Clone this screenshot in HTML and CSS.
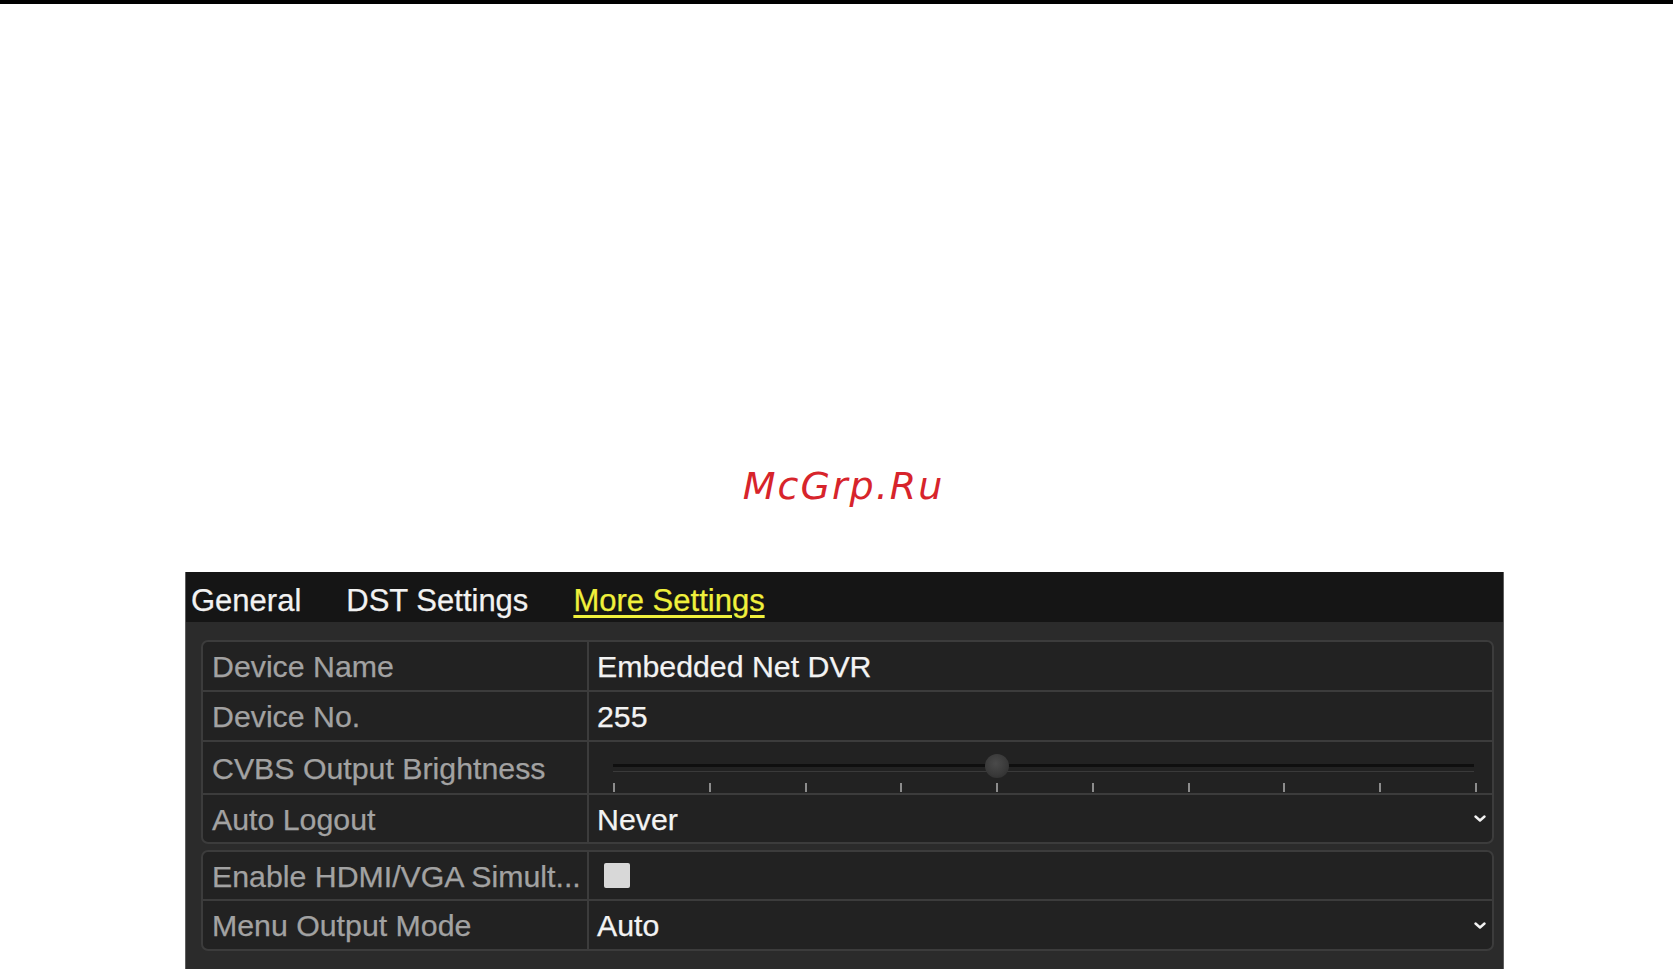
FILE: index.html
```html
<!DOCTYPE html>
<html>
<head>
<meta charset="utf-8">
<link rel="stylesheet" href="styles.css">
</head>
<body>
<div class="topbar"></div>
<div class="mark">McGrp.Ru</div>
<div class="panel">
  <div class="tabs">
    <span class="tab">General</span>
    <span class="tab">DST Settings</span>
    <span class="tab active">More Settings</span>
  </div>
  <div class="body">
    <div class="group">
      <div class="row row-a">
        <div class="label">Device Name</div>
        <div class="value">Embedded Net DVR</div>
      </div>
      <div class="row row-a">
        <div class="label">Device No.</div>
        <div class="value">255</div>
      </div>
      <div class="row row-slider">
        <div class="label">CVBS Output Brightness</div>
        <div class="value">
          <div class="slider">
            <div class="track"></div>
            <div class="track-light"></div>
            <div class="ticks">
              <i></i><i></i><i></i><i></i><i></i><i></i><i></i><i></i><i></i><i></i>
            </div>
            <div class="knob"></div>
          </div>
        </div>
      </div>
      <div class="row">
        <div class="label">Auto Logout</div>
        <div class="value select"><span>Never</span>
          <svg class="chev" width="12" height="8" viewBox="0 0 12 8"><polyline points="1.5,1.5 6,5.5 10.5,1.5" fill="none" stroke="#f2f2f2" stroke-width="2.4" stroke-linecap="round" stroke-linejoin="round"/></svg>
        </div>
      </div>
    </div>
    <div class="group">
      <div class="row">
        <div class="label">Enable HDMI/VGA Simult...</div>
        <div class="value"><span class="checkbox"></span></div>
      </div>
      <div class="row row-a">
        <div class="label">Menu Output Mode</div>
        <div class="value select"><span>Auto</span>
          <svg class="chev" width="12" height="8" viewBox="0 0 12 8"><polyline points="1.5,1.5 6,5.5 10.5,1.5" fill="none" stroke="#f2f2f2" stroke-width="2.4" stroke-linecap="round" stroke-linejoin="round"/></svg>
        </div>
      </div>
    </div>
  </div>
</div>
</body>
</html>
```
FILE: styles.css
```css
html, body {
  margin: 0;
  padding: 0;
  background: #ffffff;
  overflow: hidden;
}

.topbar {
  height: 4px;
  background: #000000;
}

.mark {
  margin-top: 460px;
  height: 44px;
  line-height: 44px;
  text-align: center;
  padding-left: 14px;
  font-family: "DejaVu Sans", sans-serif;
  font-style: italic;
  font-size: 38px;
  letter-spacing: 2px;
  color: #d7242b;
}

.panel {
  margin-top: 64px;
  margin-left: 185px;
  width: 1317px;
  border-left: 1px solid #5e5e5e;
  border-right: 1px solid #5e5e5e;
  font-family: "Liberation Sans", Arial, sans-serif;
  font-size: 30.3px;
  -webkit-text-stroke: 0.25px currentColor;
}

.tabs {
  height: 44px;
  padding-top: 6px;
  line-height: 46px;
  background: #151515;
  display: flex;
  gap: 45px;
  padding-left: 5px;
  font-size: 31px;
}

.tab {
  color: #f2f2f2;
  white-space: nowrap;
}

.tab.active {
  color: #f0f03c;
  text-decoration: underline;
  text-decoration-thickness: 3px;
  text-underline-offset: 4px;
}

.body {
  background: #2b2b2b;
  padding: 18px 9px 18px 15px;
  display: flex;
  flex-direction: column;
  gap: 6px;
}

.group {
  border: 2px solid #3c3c3c;
  border-radius: 7px;
  background: #222222;
  overflow: hidden;
}

.row {
  display: grid;
  grid-template-columns: 386px 1fr;
  height: 47px;
  border-top: 2px solid #3c3c3c;
}

.row:first-child {
  border-top: none;
}

.row-a {
  height: 48px;
}

.row-slider {
  height: 51px;
}

.label {
  border-right: 2px solid #3c3c3c;
  color: #a2a2a2;
  padding-left: 9px;
  padding-top: 2px;
  display: flex;
  align-items: center;
  white-space: nowrap;
}

.value {
  color: #f3f3f3;
  padding-left: 8px;
  padding-top: 2px;
  display: flex;
  align-items: center;
  white-space: nowrap;
}

.select {
  justify-content: space-between;
}

.chev {
  margin-right: 6px;
  margin-top: -1px;
}

.checkbox {
  display: block;
  width: 26px;
  height: 25px;
  margin-left: 7px;
  margin-top: -2px;
  background: #d8d8d8;
  border-radius: 2px;
}

.row-slider .value {
  padding-left: 0;
  padding-top: 0;
  align-items: stretch;
}

.slider {
  position: relative;
  flex: 1;
  margin: 0 15px 0 24px;
  padding-top: 22px;
}

.track {
  height: 3px;
  background: #0f0f0f;
  margin-right: 3px;
}

.track-light {
  height: 1px;
  margin-top: 4px;
  margin-right: 3px;
  background: #3a3a3a;
}

.ticks {
  margin-top: 11px;
  height: 10px;
  display: flex;
  justify-content: space-between;
}

.ticks i {
  display: block;
  width: 2px;
  height: 9px;
  background: #8c8c8c;
}

.knob {
  position: absolute;
  top: 12px;
  left: calc((100% - 2px) * 4 / 9 - 11px);
  width: 24px;
  height: 24px;
  border-radius: 50%;
  background: radial-gradient(circle at 45% 40%, #4a4a4a 0%, #3a3a3a 55%, #2a2a2a 100%);
}
```
